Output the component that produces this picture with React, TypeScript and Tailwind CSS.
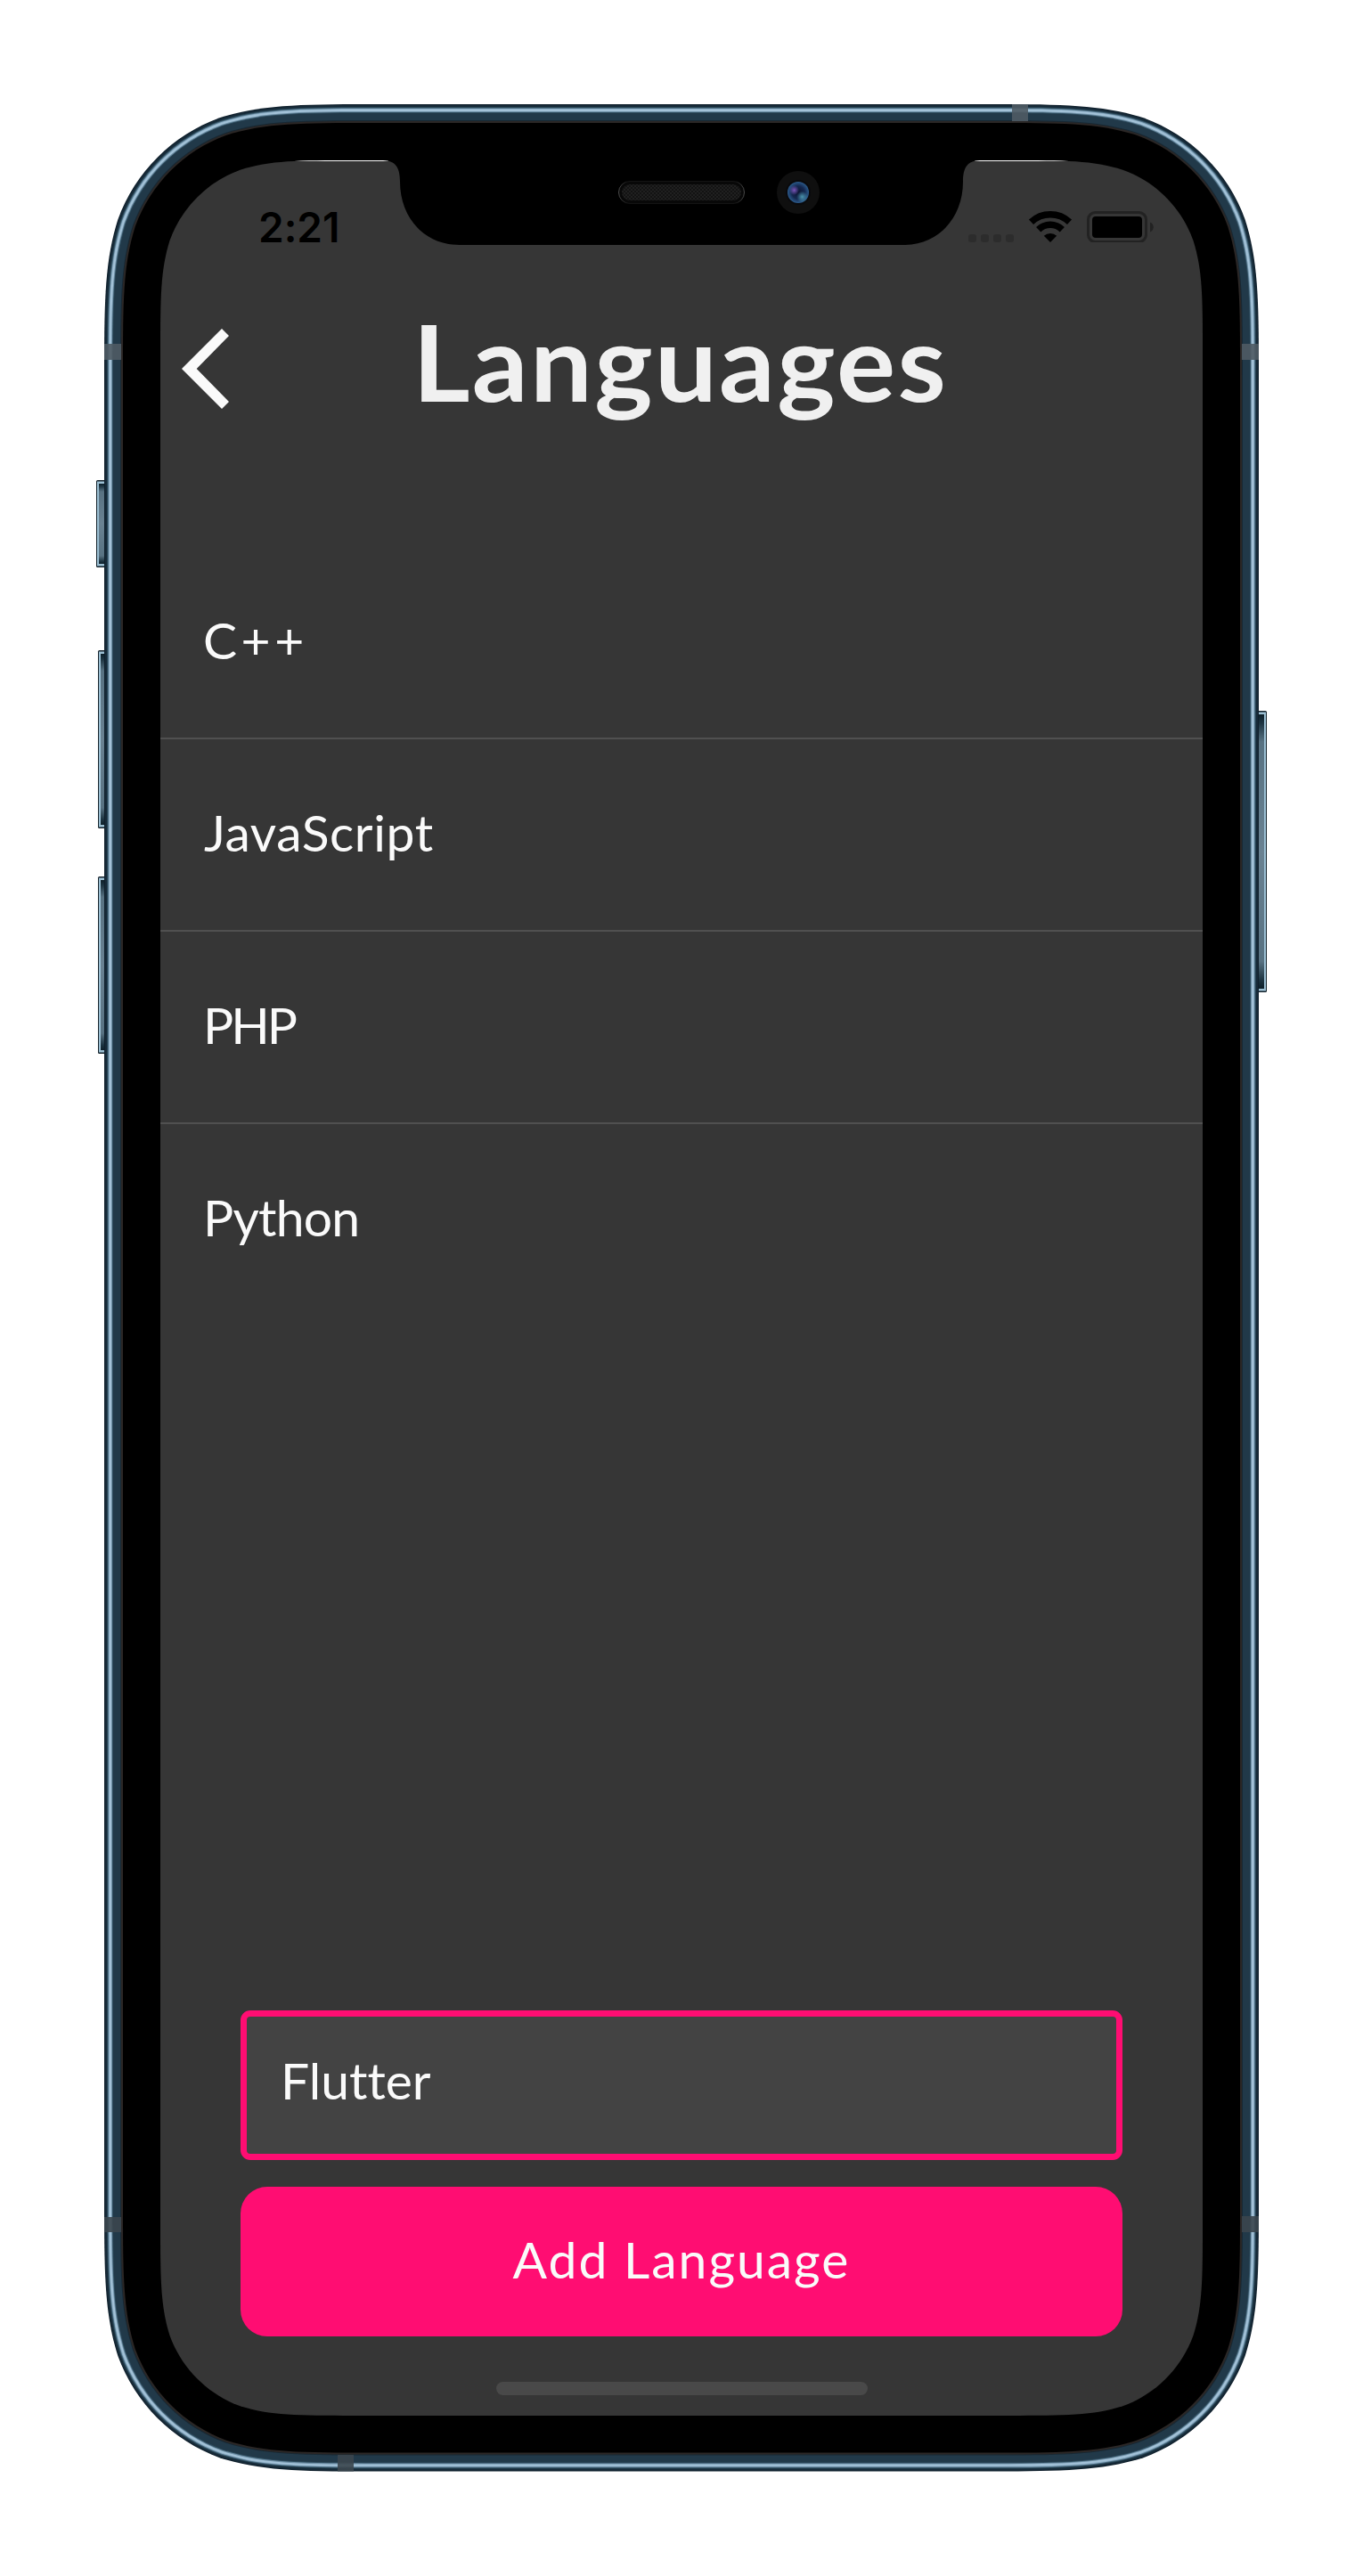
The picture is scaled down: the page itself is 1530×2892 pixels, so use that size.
import React from "react";

const LANGUAGES = [
  { name: "C++", fit: "tracking-[4.5px]" },
  { name: "JavaScript", fit: "tracking-[0.6px] pl-px" },
  { name: "PHP", fit: "tracking-[-3px]" },
  { name: "Python", fit: "tracking-[-0.8px]" },
];

/* Rounded rectangle with continuous-curvature corners. */
function squircle(x: number, y: number, w: number, h: number, r: number) {
  const X = x + w;
  const Y = y + h;
  const a = 1.528665 * r;
  const b = 1.088493 * r;
  const c = 0.868407 * r;
  const d = 0.631494 * r;
  const e = 0.074911 * r;
  const f = 0.372824 * r;
  const g = 0.169059 * r;
  return [
    `M${x + a} ${y}H${X - a}`,
    `C${X - b} ${y} ${X - c} ${y} ${X - d} ${y + e}C${X - f} ${y + g} ${X - g} ${y + f} ${X - e} ${y + d}C${X} ${y + c} ${X} ${y + b} ${X} ${y + a}`,
    `V${Y - a}`,
    `C${X} ${Y - b} ${X} ${Y - c} ${X - e} ${Y - d}C${X - g} ${Y - f} ${X - f} ${Y - g} ${X - d} ${Y - e}C${X - c} ${Y} ${X - b} ${Y} ${X - a} ${Y}`,
    `H${x + a}`,
    `C${x + b} ${Y} ${x + c} ${Y} ${x + d} ${Y - e}C${x + f} ${Y - g} ${x + g} ${Y - f} ${x + e} ${Y - d}C${x} ${Y - c} ${x} ${Y - b} ${x} ${Y - a}`,
    `V${y + a}`,
    `C${x} ${y + b} ${x} ${y + c} ${x + e} ${y + d}C${x + g} ${y + f} ${x + f} ${y + g} ${x + d} ${y + e}C${x + c} ${y} ${x + b} ${y} ${x + a} ${y}Z`,
  ].join("");
}

const SCREEN = squircle(180, 180, 1170, 2532, 142);

const RIM: [number, string][] = [
  [0, "#0f1f2b"],
  [1, "#162a38"],
  [3, "#274454"],
  [4, "#4c6d82"],
  [5, "#8fb0c7"],
  [6, "#a3c2d8"],
  [8, "#6d8ea4"],
  [9, "#2f4d5f"],
  [10, "#213949"],
  [18, "#182833"],
  [19, "#2b2726"],
  [21, "#000000"],
];

function SideButton({ x, y, w, h, right }: { x: number; y: number; w: number; h: number; right?: boolean }) {
  return (
    <g transform={right ? `translate(${2 * x + w} 0) scale(-1 1)` : undefined}>
      <rect x={x} y={y} width={w + 2} height={h} rx="1.5" fill="#14232c" />
      <rect x={x + 1} y={y + 1.5} width={w + 1} height={h - 3} fill="#9cc0d4" />
      <rect x={x + 3} y={y + 4} width={w - 1} height={h - 8} fill="url(#sideButton)" />
    </g>
  );
}

function DeviceFrame() {
  return (
    <svg className="absolute inset-0" width="1530" height="2892" viewBox="0 0 1530 2892" aria-hidden="true">
      <defs>
        <linearGradient id="sideButton" x1="0" y1="0" x2="0" y2="1">
          <stop offset="0" stopColor="#0d1f29" />
          <stop offset="0.03" stopColor="#1c3340" />
          <stop offset="0.1" stopColor="#587282" />
          <stop offset="0.5" stopColor="#6a8292" />
          <stop offset="0.9" stopColor="#587282" />
          <stop offset="0.97" stopColor="#1c3340" />
          <stop offset="1" stopColor="#0d1f29" />
        </linearGradient>
        <radialGradient id="lens">
          <stop offset="0" stopColor="#0b1330" />
          <stop offset="0.6" stopColor="#152850" />
          <stop offset="1" stopColor="#2b5a8a" />
        </radialGradient>
        <radialGradient id="violet">
          <stop offset="0" stopColor="#7a55b8" />
          <stop offset="1" stopColor="#7a55b8" stopOpacity="0" />
        </radialGradient>
        <radialGradient id="teal">
          <stop offset="0" stopColor="#4a93ac" />
          <stop offset="1" stopColor="#4a93ac" stopOpacity="0" />
        </radialGradient>
        <pattern id="mesh" width="4" height="4" patternUnits="userSpaceOnUse">
          <rect width="4" height="4" fill="#131313" />
          <rect width="2" height="2" fill="#202020" />
          <rect x="2" y="2" width="2" height="2" fill="#202020" />
        </pattern>
        <linearGradient id="speakerEdge">
          <stop offset="0" stopColor="#4a4a4a" />
          <stop offset="0.07" stopColor="#141414" />
          <stop offset="0.93" stopColor="#141414" />
          <stop offset="1" stopColor="#4a4a4a" />
        </linearGradient>
        <clipPath id="screenShape">
          <path d={SCREEN} />
        </clipPath>
      </defs>

      <SideButton x={108} y={539} w={9} h={98} />
      <SideButton x={110} y={730} w={7} h={200} />
      <SideButton x={110} y={984} w={7} h={199} />
      <SideButton x={1413} y={798} w={9} h={316} right />

      {RIM.map(([inset, color]) => (
        <path
          key={inset}
          d={squircle(117 + inset, 117 + inset, 1296 - 2 * inset, 2657.5 - 2 * inset, 205 - inset)}
          fill={color}
        />
      ))}

      <g fill="#4f5b64" fillOpacity="0.9">
        <rect x="117" y="386" width="19" height="18" />
        <rect x="1394" y="386" width="19" height="18" />
        <rect x="1136" y="117" width="18" height="19" />
      </g>
      <g fill="#3b464e" fillOpacity="0.9">
        <rect x="117" y="2489" width="19" height="17" />
        <rect x="1394" y="2488" width="19" height="18" />
        <rect x="379" y="2756" width="18" height="18.5" />
      </g>

      <path d={SCREEN} fill="#363636" />
      <path d="M327 180.5H436M1094 180.5H1203" stroke="#ffffff" clipPath="url(#screenShape)" />
      <path
        d="M430 180C444 180.500 449 188 449 204C449 243 475 275 516 275H1014C1055 275 1081 243 1081 204C1081 188 1086 180.500 1100 180Z"
        fill="#000000"
      />

      <rect x="694.500" y="203.500" width="141" height="25" rx="12.500" fill="#080808" stroke="url(#speakerEdge)" />
      <rect x="698" y="207" width="134" height="18" rx="9" fill="url(#mesh)" />
      <circle cx="896" cy="216" r="24" fill="#0f0f0f" />
      <circle cx="896" cy="216" r="14" fill="#0a0a0d" />
      <circle cx="896" cy="216" r="12" fill="url(#lens)" />
      <circle cx="891.500" cy="213.500" r="5.500" fill="url(#violet)" />
      <circle cx="900.500" cy="221" r="6.500" fill="url(#teal)" />
    </svg>
  );
}

function StatusIcons() {
  return (
    <svg className="block" width="208" height="36" viewBox="0 0 208 36" aria-label="Wi-Fi and battery status">
      <g fill="#2c2c2c">
        <rect x="0" y="27" width="9" height="9" rx="3" />
        <rect x="14" y="27" width="9" height="9" rx="3" />
        <rect x="28" y="27" width="9" height="9" rx="3" />
        <rect x="42" y="27" width="9" height="9" rx="3" />
      </g>
      <g fill="none" stroke="#000000" strokeWidth="7.500">
        <path d="M70.500 13.200A31.500 31.500 0 0 1 113.500 13.200" />
        <path d="M78.700 21.800A19 19 0 0 1 105.300 21.800" />
      </g>
      <path d="M92 36L84.800 28.800A10.500 10.500 0 0 1 99.200 28.800Z" fill="#000000" />
      <rect x="134.500" y="2.500" width="65" height="33" rx="8" fill="none" stroke="#222222" strokeWidth="3" />
      <rect x="139" y="7" width="56" height="24" rx="4" fill="#000000" />
      <path d="M204 13.500C209 15.500 209 22.500 204 24.500Z" fill="#222222" />
    </svg>
  );
}

export default function App() {
  return (
    <div className="relative h-[2892px] w-[1530px] overflow-hidden bg-white p-[180px] font-['Lato',sans-serif] text-[#fafafa] [font-variant-ligatures:none]">
      <DeviceFrame />
      <div className="relative flex h-[2532px] w-[1170px] flex-col">
        <div className="flex h-[132px] items-start justify-between pr-[55px] pl-[110px]">
          <span className="pt-[45px] font-['Inter',sans-serif] text-[46px] leading-[60px] font-semibold text-black">
            2:21
          </span>
          <div className="pt-[56px]">
            <StatusIcons />
          </div>
        </div>

        <header className="flex h-[204px] items-center px-6">
          <button aria-label="Back" className="w-[54px]">
            <svg width="54" height="90" viewBox="0 0 54 90">
              <path d="M0 45L45 0L53 8L16.700 45L53 82L45 90Z" fill="#fafafa" />
            </svg>
          </button>
          <h1 className="flex-1 scale-x-[1.05] pr-[54px] pb-[16px] text-center text-[118px] leading-[144px] font-bold tracking-[2.2px] text-[#f0f0f0]">
            Languages
          </h1>
        </header>

        <ul className="mt-[98px] flex flex-col">
          {LANGUAGES.map((language) => (
            <li
              key={language.name}
              className="flex h-[216px] items-center border-b-2 border-[#505050] px-12 pb-[7px] text-[57px] leading-[70px] last:border-transparent"
            >
              <span className={language.fit}>{language.name}</span>
            </li>
          ))}
        </ul>

        <div className="mt-auto flex flex-col items-center gap-[30px] px-[90px]">
          <div className="flex h-[168px] w-full items-center rounded-[11px] border-[7px] border-[#ff0d72] bg-[#434343] px-[38px] pb-[12px] text-[57px] leading-[70px]">
            Flutter
          </div>
          <button className="h-[168px] w-full rounded-[30px] bg-[#ff0d72] pb-[7px] text-[57px] leading-[70px] tracking-[2px]">
            Add Language
          </button>
        </div>
        <div className="mt-[51px] mb-[23px] h-[15px] w-[417px] self-center rounded-full bg-[#494949]" />
      </div>
    </div>
  );
}
